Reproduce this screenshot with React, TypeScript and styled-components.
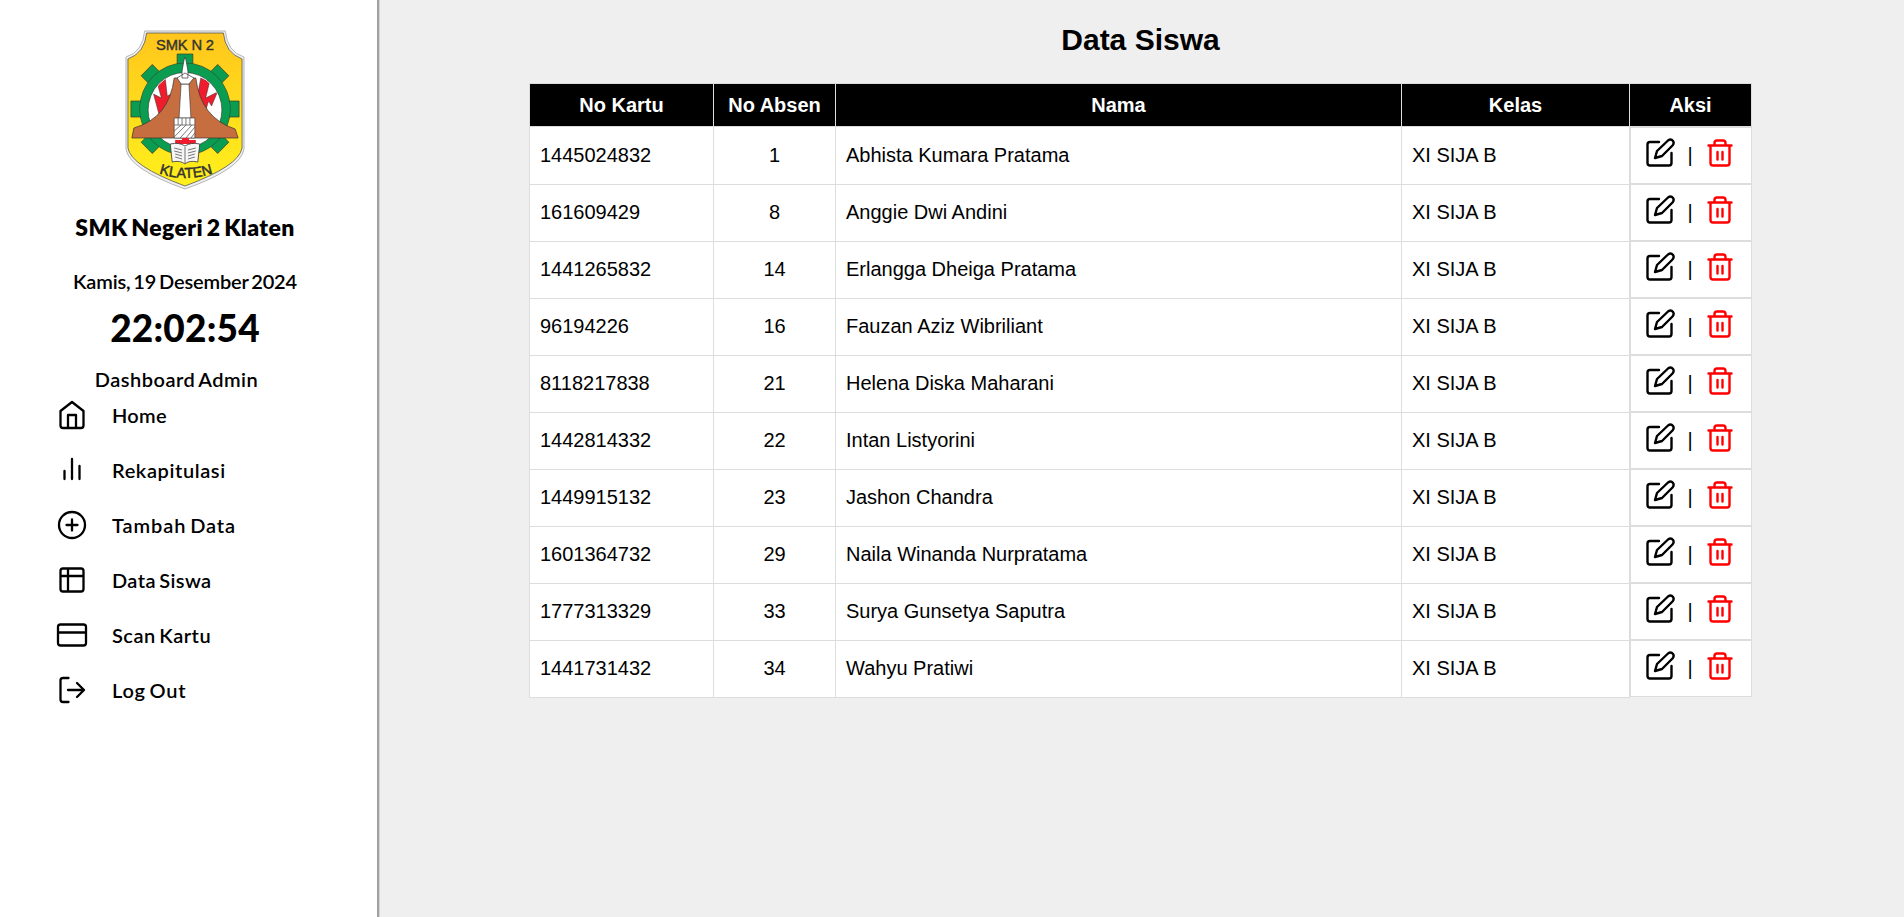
import React from 'react';
import styled, { createGlobalStyle } from 'styled-components';

const GlobalStyle = createGlobalStyle`
  * { box-sizing: border-box; }
  body { margin: 0; background: #efefef; font-family: "Liberation Sans", Arial, sans-serif; color: #000; }
`;

const Page = styled.div`
  display: flex;
  height: 917px;
  overflow: hidden;
`;

const Sidebar = styled.aside`
  width: 379px;
  flex: none;
  background: #fff;
  border-right: 2px solid #a0a2a2;
  box-shadow: 1px 0 0 #d2d3d3;
  padding: 30px 7px 0 0;
  display: flex;
  flex-direction: column;
  align-items: center;
  font-family: Lato, sans-serif;
`;

const Label = styled.div<{ $size: number; $weight?: number; $line: number; $top?: number; $track?: number; $word?: number; $shift?: number }>`
  font-size: ${p => p.$size}px;
  font-weight: ${p => p.$weight ?? 600};
  line-height: ${p => p.$line}px;
  margin-top: ${p => p.$top ?? 0}px;
  margin-bottom: 0;
  margin-right: ${p => p.$shift ?? 0}px;
  letter-spacing: ${p => p.$track ?? 0}px;
  word-spacing: ${p => p.$word ?? -2}px;
  white-space: nowrap;
`;

const Menu = styled.nav`
  align-self: stretch;
  display: flex;
  flex-direction: column;
  margin-top: -5px;
  padding-left: 56px;
`;

const MenuItem = styled.a`
  display: flex;
  align-items: center;
  height: 55px;
  gap: 24px;
  svg { flex: none; }
`;

const Icon = styled.svg<{ $color?: string }>`
  width: 32px;
  height: 32px;
  fill: none;
  stroke: ${p => p.$color ?? '#000'};
  stroke-width: 2.3;
  stroke-linecap: round;
  stroke-linejoin: round;
`;

const Content = styled.main`
  flex: 1;
  padding: 22px 0 0 150px;
`;

const Title = styled.h1`
  margin: 0 0 25px;
  width: 1223px;
  text-align: center;
  font-size: 30px;
  line-height: 36px;
`;

const Table = styled.table`
  width: 1222px;
  table-layout: fixed;
  border-collapse: collapse;
  font-size: 20px;
  line-height: 23px;
`;

const Col = styled.col<{ $w: number }>`
  width: ${p => p.$w}px;
`;

const Th = styled.th`
  height: 43px;
  padding: 0;
  background: #000;
  color: #fff;
  border: 1px solid #ddd;
`;

const Td = styled.td<{ $center?: boolean }>`
  height: 57px;
  padding: 0 10px;
  background: #fff;
  border: 1px solid #ddd;
  text-align: ${p => (p.$center ? 'center' : 'left')};
`;

const ActionTd = styled.td`
  display: flex;
  align-items: center;
  height: 57px;
  padding: 0 0 0 13px;
  background: #fff;
  border: 1px solid #ddd;
  svg { flex: none; margin-bottom: 5px; stroke-width: 2.4; }
`;

const Bar = styled.span`
  width: 28px;
  text-align: center;
`;

const Logo = () => (
  <svg width="120" height="160" viewBox="0 0 122 160" preserveAspectRatio="none">
    <path d="M20 1H102Q104 22 121 27V119Q118 139 61 159Q4 139 1 119V27Q18 22 20 1Z" fill="#eee" stroke="#b5b5b5" strokeWidth="1" />
    <defs>
      <linearGradient id="shield" x2="0" y2="1">
        <stop offset="0" stopColor="#ffc61c" />
        <stop offset=".5" stopColor="#ffdc1c" />
        <stop offset="1" stopColor="#fff01c" />
      </linearGradient>
      <clipPath id="disc"><circle cx="61" cy="80" r="36.500" /></clipPath>
    </defs>
    <path d="M22 3H100Q102 23 119 29V118Q116 136 61 156Q6 136 3 118V29Q20 23 22 3Z" fill="url(#shield)" stroke="#555" strokeWidth=".8" />
    <g fill="#0a9c50" stroke="#3c3c28" strokeWidth=".7">
      {[-135, -90, -45, 0, 45, 90, 135].map(a => (
        <path key={a} d="M53 43V24H69V43Z" transform={`rotate(${a} 61 79)`} />
      ))}
      <circle cx="61" cy="79" r="46" />
    </g>
    <circle cx="61" cy="79" r="45.500" fill="#0a9c50" />
    <circle cx="61" cy="80" r="37.500" fill="#fff" stroke="#333" strokeWidth=".6" />
    <g fill="#ee1c2c" stroke="#333" strokeWidth=".5" clipPath="url(#disc)">
      <path d="M33 54L41 49L43 66L49 63L42 85L35 86L29 64L37 68Z" />
      <path d="M77 48L86 52L82 68L94 62L88 76L85 71L80 87L73 70Z" />
    </g>
    <path d="M50 48H72Q77 88 112 99L115 108H7L9 98Q45 88 50 48Z" fill="#c66e3f" stroke="#333" strokeWidth=".7" />
    <path d="M57 54H65L67 88H55Z" fill="#fff" stroke="#333" strokeWidth=".6" />
    <path d="M53 48L61 43L70 48L65 54H57Z M58 41L60 30L61 27L62 30L64 41V48H58Z" fill="#fff" stroke="#333" strokeWidth=".7" />
    <path d="M50 88H71V108H50Z" fill="#fff" stroke="#333" strokeWidth=".6" />
    <path d="M54 88V95M58 88V95M62 88V95M66 88V95M50 95H71M50 101L57 95M50 107L62 95M56 108L68 95M62 108L71 97M67 108L71 103" stroke="#444" strokeWidth=".7" />
    <path d="M51 110H58V108H65V110H72V114H51Z" fill="#ee1c2c" />
    <path d="M46 114Q55 112 61 116Q67 112 76 114L74 132Q65 130 61 134Q56 130 48 132Z" fill="#f6f6f6" stroke="#333" strokeWidth=".8" />
    <path d="M61 117V133M50 118L58 120M50 121L58 123M51 124L58 126M51 127L58 129M72 118L64 120M72 121L64 123M71 124L64 126M71 127L64 129" stroke="#555" strokeWidth=".8" />
    <text x="61" y="20" textAnchor="middle" fontFamily="Liberation Sans" fontSize="15" stroke="#333" strokeWidth=".4" fill="#333" textLength="59">SMK N 2</text>
    <path id="arc" d="M28 141Q61 155 96 141" fill="none" />
    <text fontFamily="Liberation Sans" fontSize="14.500" fill="#333" stroke="#333" strokeWidth=".5"><textPath href="#arc" startOffset="50%" textAnchor="middle" textLength="56">KLATEN</textPath></text>
  </svg>
);

const menu: { text: string; track: number; d: string }[] = [
  { text: 'Home', track: 0.3, d: 'M4.5 12L16 3L27.5 12V26.5Q27.5 29 25 29H7Q4.5 29 4.5 26.5ZM12 29V16H20V29' },
  { text: 'Rekapitulasi', track: 0.6, d: 'M8.5 17V25M16 5V25M23.5 12V25' },
  { text: 'Tambah Data', track: 0.9, d: 'M29 16A13 13 0 1 1 3 16A13 13 0 1 1 29 16ZM16 10.5V21.5M10.5 16H21.5' },
  { text: 'Data Siswa', track: 0.4, d: 'M7 4.5H25Q27.5 4.5 27.5 7V25Q27.5 27.5 25 27.5H7Q4.5 27.5 4.5 25V7Q4.5 4.5 7 4.5ZM12 4.5V27.5M4.5 12H27.5' },
  { text: 'Scan Kartu', track: 0.5, d: 'M4.5 5.5H27.5Q30 5.5 30 8V24Q30 26.5 27.5 26.5H4.5Q2 26.5 2 24V8Q2 5.5 4.5 5.5ZM2 13.5H30' },
  { text: 'Log Out', track: 0.75, d: 'M12.5 4H7Q4.5 4 4.5 6.5V25.5Q4.5 28 7 28H12.5M12 16H28M21 9L28 16L21 23' },
];

const students: [string, number, string][] = [
  ['1445024832', 1, 'Abhista Kumara Pratama'],
  ['161609429', 8, 'Anggie Dwi Andini'],
  ['1441265832', 14, 'Erlangga Dheiga Pratama'],
  ['96194226', 16, 'Fauzan Aziz Wibriliant'],
  ['8118217838', 21, 'Helena Diska Maharani'],
  ['1442814332', 22, 'Intan Listyorini'],
  ['1449915132', 23, 'Jashon Chandra'],
  ['1601364732', 29, 'Naila Winanda Nurpratama'],
  ['1777313329', 33, 'Surya Gunsetya Saputra'],
  ['1441731432', 34, 'Wahyu Pratiwi'],
];

export default function App() {
  return (
    <Page>
      <GlobalStyle />
      <Sidebar>
        <Logo />
        <Label as="h2" $size={23} $weight={800} $line={30} $top={22} $track={0.4}>SMK Negeri 2 Klaten</Label>
        <Label $size={20} $line={26} $top={26} $track={-0.15}>Kamis, 19 Desember 2024</Label>
        <Label $size={37} $weight={900} $line={44} $top={12} $track={0.2}>22:02:54</Label>
        <Label $size={20} $line={26} $top={16} $shift={17} $track={0.5}>Dashboard Admin</Label>
        <Menu>
          {menu.map(m => (
            <MenuItem key={m.text}>
              <Icon viewBox="0 0 32 32"><path d={m.d} /></Icon>
              <Label as="span" $size={20} $line={26} $track={m.track}>{m.text}</Label>
            </MenuItem>
          ))}
        </Menu>
      </Sidebar>
      <Content>
        <Title>Data Siswa</Title>
        <Table>
          <colgroup>
            {[184, 122, 566, 228, 122].map((w, i) => <Col key={i} $w={w} />)}
          </colgroup>
          <thead>
            <tr>{['No Kartu', 'No Absen', 'Nama', 'Kelas', 'Aksi'].map(h => <Th key={h}>{h}</Th>)}</tr>
          </thead>
          <tbody>
            {students.map(([card, no, name]) => (
              <tr key={card}>
                <Td>{card}</Td>
                <Td $center>{no}</Td>
                <Td>{name}</Td>
                <Td>XI SIJA B</Td>
                <ActionTd>
                  <Icon viewBox="0 0 32 32"><path d="M15 5H6Q3.500 5 3.500 7.500V26Q3.500 28.500 6 28.500H25Q27.500 28.500 27.500 26V16M11 21L13 14L24 3.500Q27 1.500 29 4Q30.500 6 28.500 8.500L18 19Z" /></Icon>
                  <Bar>|</Bar>
                  <Icon viewBox="0 0 32 32" $color="#f00"><path d="M4.500 8.500H27.500M6.500 8.500V26Q6.500 28.500 9 28.500H23Q25.500 28.500 25.500 26V8.500M10.500 8V6Q10.500 3.500 13 3.500H19Q21.500 3.500 21.500 6V8M13.500 15V22.500M18.500 15V22.500" /></Icon>
                </ActionTd>
              </tr>
            ))}
          </tbody>
        </Table>
      </Content>
    </Page>
  );
}
